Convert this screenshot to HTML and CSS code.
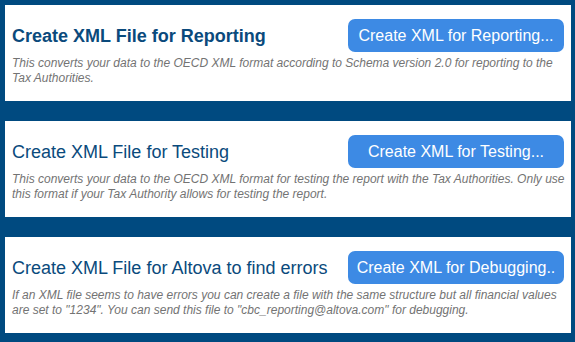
FILE: index.html
```html
<!DOCTYPE html>
<html>
<head>
<meta charset="utf-8">
<link rel="stylesheet" href="styles.css">
</head>
<body>
<div class="page">
  <section class="panel">
    <div class="head">
      <h2 class="title title-bold">Create XML File for Reporting</h2>
      <button class="btn">Create XML for Reporting...</button>
    </div>
    <p class="desc">This converts your data to the OECD XML format according to Schema version 2.0 for reporting to the Tax Authorities.</p>
  </section>
  <section class="panel">
    <div class="head">
      <h2 class="title">Create XML File for Testing</h2>
      <button class="btn">Create XML for Testing...</button>
    </div>
    <p class="desc">This converts your data to the OECD XML format for testing the report with the Tax Authorities. Only use this format if your Tax Authority allows for testing the report.</p>
  </section>
  <section class="panel">
    <div class="head">
      <h2 class="title">Create XML File for Altova to find errors</h2>
      <button class="btn">Create XML for Debugging..</button>
    </div>
    <p class="desc">If an XML file seems to have errors you can create a file with the same structure but all financial values are set to "1234". You can send this file to "cbc_reporting@altova.com" for debugging.</p>
  </section>
</div>
</body>
</html>
```

FILE: styles.css
```css
html, body {
  margin: 0;
  padding: 0;
  background: #004a80;
  font-family: "Liberation Sans", Arial, sans-serif;
}
.page {
  display: flex;
  flex-direction: column;
  gap: 20px;
  padding: 5px 4px 9px 5px;
}
.panel {
  background: #ffffff;
  height: 96px;
  box-sizing: border-box;
  padding: 14px 3px 0 7px;
}
.head {
  display: flex;
  align-items: center;
  justify-content: space-between;
  height: 33px;
  padding-right: 4px;
}
.title {
  margin: 0;
  font-size: 18px;
  font-weight: normal;
  color: #0a4a7c;
  line-height: 22px;
}
.title-bold {
  font-weight: bold;
}
.btn {
  width: 216px;
  height: 33px;
  border: none;
  border-radius: 7px;
  background: #3d8ae4;
  color: #ffffff;
  font-family: "Liberation Sans", Arial, sans-serif;
  font-size: 16px;
  padding: 0;
  white-space: nowrap;
  overflow: hidden;
}
.desc {
  margin: 4px 0 0 0;
  font-size: 12px;
  line-height: 15px;
  font-style: italic;
  color: #737373;
}
```
